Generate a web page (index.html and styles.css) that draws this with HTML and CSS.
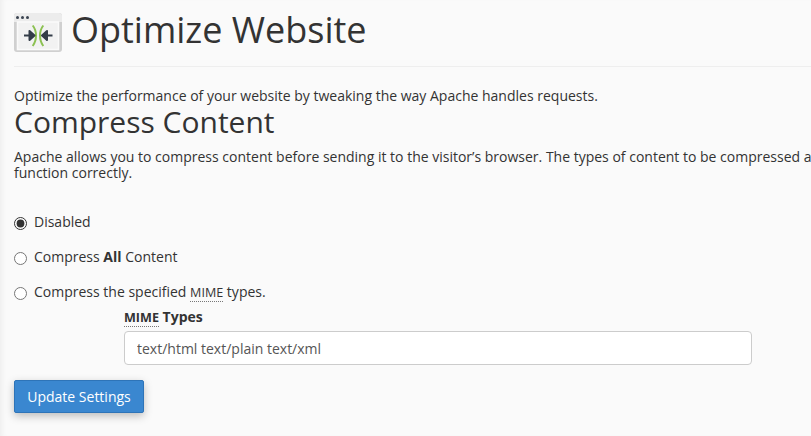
FILE: index.html
```html
<!DOCTYPE html>
<html lang="en">
<head>
    <meta charset="UTF-8">
    <meta name="viewport" content="width=device-width, initial-scale=1.0">
    <title>Optimize Website</title>
    <link rel="stylesheet" href="styles.css">
</head>
<body>
    <header class="page-header">
        <svg class="page-icon" width="48" height="40" viewBox="0 0 48 40">
            <rect x="0" y="0" width="48" height="39" rx="3" fill="#d0d0d0"/>
            <path d="M0 9V3a3 3 0 0 1 3-3H45a3 3 0 0 1 3 3V9Z" fill="#ececec"/>
            <rect x="3.5" y="9" width="41" height="27.5" fill="#f2f2f2" stroke="#fafafa" stroke-width="1.5"/>
            <circle cx="3.5" cy="4.5" r="1.5" fill="#3a4350"/>
            <circle cx="8.5" cy="4.5" r="1.5" fill="#3a4350"/>
            <circle cx="13.5" cy="4.5" r="1.5" fill="#3a4350"/>
            <path d="M18.7 12.5C23.1 18 23.1 27 18.7 33M29.3 12.5C24.9 18 24.9 27 29.3 33" fill="none" stroke="#8cc152" stroke-width="2"/>
            <path d="M10 22.5H16M20.5 22.5L15.5 18V27Z" fill="#333c48" stroke="#333c48" stroke-width="2" stroke-linejoin="round"/>
            <path d="M38.5 22.5H32.5M28 22.5L33 18V27Z" fill="#333c48" stroke="#333c48" stroke-width="2" stroke-linejoin="round"/>
        </svg>
        <h1>Optimize Website</h1>
    </header>

    <main class="content">
        <p class="intro">Optimize the performance of your website by tweaking the way Apache handles requests.</p>
        <h2>Compress Content</h2>
        <p class="details">Apache allows you to compress content before sending it to the visitor’s browser. The types of content to be compressed are specified by a list of MIME types.<br>function correctly.</p>

        <form class="options">
            <label class="option"><input type="radio" name="compress" checked> Disabled</label>
            <label class="option"><input type="radio" name="compress"> <span>Compress <b>All</b> Content</span></label>
            <label class="option"><input type="radio" name="compress"> <span>Compress the specified <abbr>MIME</abbr> types.</span></label>
            <div class="mime-field">
                <label class="mime-label" for="mime-types"><abbr>MIME</abbr> Types</label>
                <input class="mime-input" id="mime-types" type="text" value="text/html text/plain text/xml">
            </div>
            <button class="update-btn" type="button">Update Settings</button>
        </form>
    </main>
</body>
</html>
```

FILE: styles.css
```css
html, body {
    height: 100%;
    overflow: hidden;
}
body {
    font-family: "Open Sans", sans-serif;
    font-size: 14px;
    line-height: 20px;
    color: #333;
    margin: 0;
    padding: 0;
    background-color: #fafafa;
    box-shadow: inset 5px 0 5px -3px #eee;
}
.page-header {
    display: flex;
    align-items: center;
    gap: 9px;
    height: 67px;
    margin-left: 14px;
    padding-bottom: 4px;
    box-sizing: border-box;
    border-bottom: 1px solid #eee;
}
.page-icon {
    flex: none;
    margin-top: 4px;
}
h1 {
    font-size: 36px;
    font-weight: 400;
    line-height: 40px;
    margin: -2px 0 0 0;
}
h2 {
    font-size: 30px;
    font-weight: 400;
    line-height: 31px;
    margin: 0 0 12px 0;
}
.content {
    padding: 19px 14px 0 14px;
}
.intro {
    margin: 0;
    white-space: nowrap;
}
.details {
    margin: 0;
    line-height: 16px;
    white-space: nowrap;
}
abbr {
    font-size: 90%;
    border-bottom: 1px dotted #777;
}
.options {
    margin-top: 31px;
}
.option {
    display: flex;
    align-items: center;
    gap: 7px;
    height: 20px;
    margin-bottom: 15px;
}
.option input {
    width: 13px;
    height: 13px;
    margin: 2px 0 0 0;
    accent-color: #333;
}
.mime-field {
    margin: -10px 0 0 110px;
    width: 628px;
}
.mime-label {
    display: block;
    font-weight: 700;
    margin-bottom: 3px;
}
.mime-input {
    display: block;
    width: 100%;
    height: 34px;
    box-sizing: border-box;
    padding: 6px 12px;
    font-family: "Open Sans", sans-serif;
    font-size: 14px;
    color: #555;
    background-color: #fff;
    border: 1px solid #ccc;
    border-radius: 4px;
}
.update-btn {
    display: block;
    margin-top: 15px;
    width: 130px;
    height: 33px;
    padding: 0;
    font-family: "Open Sans", sans-serif;
    font-size: 14px;
    color: #fff;
    background-color: #3a87d0;
    border: 1px solid #2e74b8;
    border-radius: 2px;
    box-shadow: 0 3px 8px rgba(0, 0, 0, 0.25);
}
```
